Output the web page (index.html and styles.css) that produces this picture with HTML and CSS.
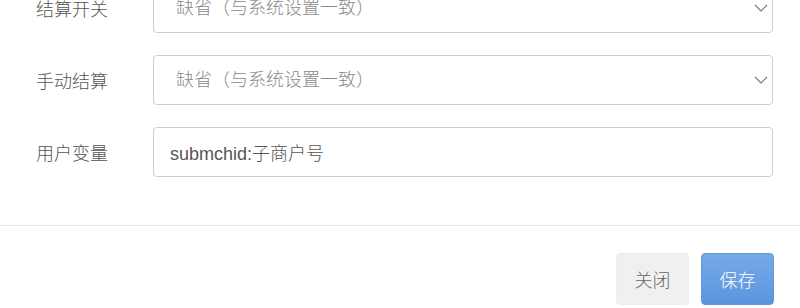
FILE: index.html
```html
<!DOCTYPE html>
<html lang="zh-CN">

<head>
    <meta charset="UTF-8">
    <meta name="viewport" content="width=device-width, initial-scale=1.0">
    <title>结算设置</title>
    <link rel="stylesheet" href="styles.css">
</head>
<body>
    <div class="modal">
        <div class="modal-body">
            <div class="row">
                <label class="label">结算开关</label>
                <div class="control select-wrap">
                    <select class="field select">
                        <option>缺省（与系统设置一致）</option>
                    </select>
                    <svg class="arrow" width="14" height="8" viewBox="0 0 14 8">
                        <path d="M1 1 L7 7 L13 1" fill="none" stroke="#777" stroke-width="1.1"/>
                    </svg>
                </div>
            </div>
            <div class="row">
                <label class="label">手动结算</label>
                <div class="control select-wrap">
                    <select class="field select">
                        <option>缺省（与系统设置一致）</option>
                    </select>
                    <svg class="arrow" width="14" height="8" viewBox="0 0 14 8">
                        <path d="M1 1 L7 7 L13 1" fill="none" stroke="#777" stroke-width="1.1"/>
                    </svg>
                </div>
            </div>
            <div class="row">
                <label class="label">用户变量</label>
                <div class="control">
                    <input class="field input" type="text" value="submchid:子商户号">
                </div>
            </div>
        </div>
        <div class="modal-footer">
            <button class="btn btn-close">关闭</button>
            <button class="btn btn-save">保存</button>
        </div>
    </div>
</body>
</html>
```

FILE: styles.css
```css
* {
    margin: 0;
    padding: 0;
    box-sizing: border-box;
}
body {
    background-color: #fff;
    font-family: "Liberation Sans", "Noto Sans CJK SC", sans-serif;
    font-weight: 300;
    overflow: hidden;
}
.modal {
    width: 800px;
    margin-top: -17px;
}
.modal-body {
    padding-bottom: 26px;
}
.row {
    display: flex;
    align-items: center;
    height: 50px;
    margin-bottom: 22px;
}
.label {
    width: 153px;
    padding-left: 36px;
    font-size: 18px;
    color: #555;
}
.control {
    flex: 1;
    margin-right: 27px;
    height: 50px;
}
.select-wrap {
    position: relative;
}
.field {
    width: 100%;
    height: 50px;
    border: 1px solid #ccc;
    border-radius: 4px;
    background-color: #fff;
    font-family: "Liberation Sans", "Noto Sans CJK SC", sans-serif;
    font-weight: 300;
    font-size: 18px;
    outline: none;
}
.select {
    appearance: none;
    -webkit-appearance: none;
    padding-left: 22px;
    color: #8a8a8a;
}
.input {
    padding-left: 16px;
    color: #555;
}
.arrow {
    position: absolute;
    right: 5px;
    top: 21px;
    pointer-events: none;
}
.modal-footer {
    border-top: 1px solid #e8e8e8;
    padding-top: 27px;
    padding-right: 26px;
    display: flex;
    justify-content: flex-end;
    gap: 12px;
}
.btn {
    width: 73px;
    height: 52px;
    border-radius: 4px;
    font-family: "Noto Sans CJK SC", sans-serif;
    font-weight: 300;
    font-size: 18px;
    border: 1px solid transparent;
}
.btn-close {
    background-color: #f0f0f0;
    border-color: #ececec;
    color: #666;
}
.btn-save {
    background: linear-gradient(#76aae8, #5c95dd);
    border-color: #5f98de;
    color: #fff;
}
```
